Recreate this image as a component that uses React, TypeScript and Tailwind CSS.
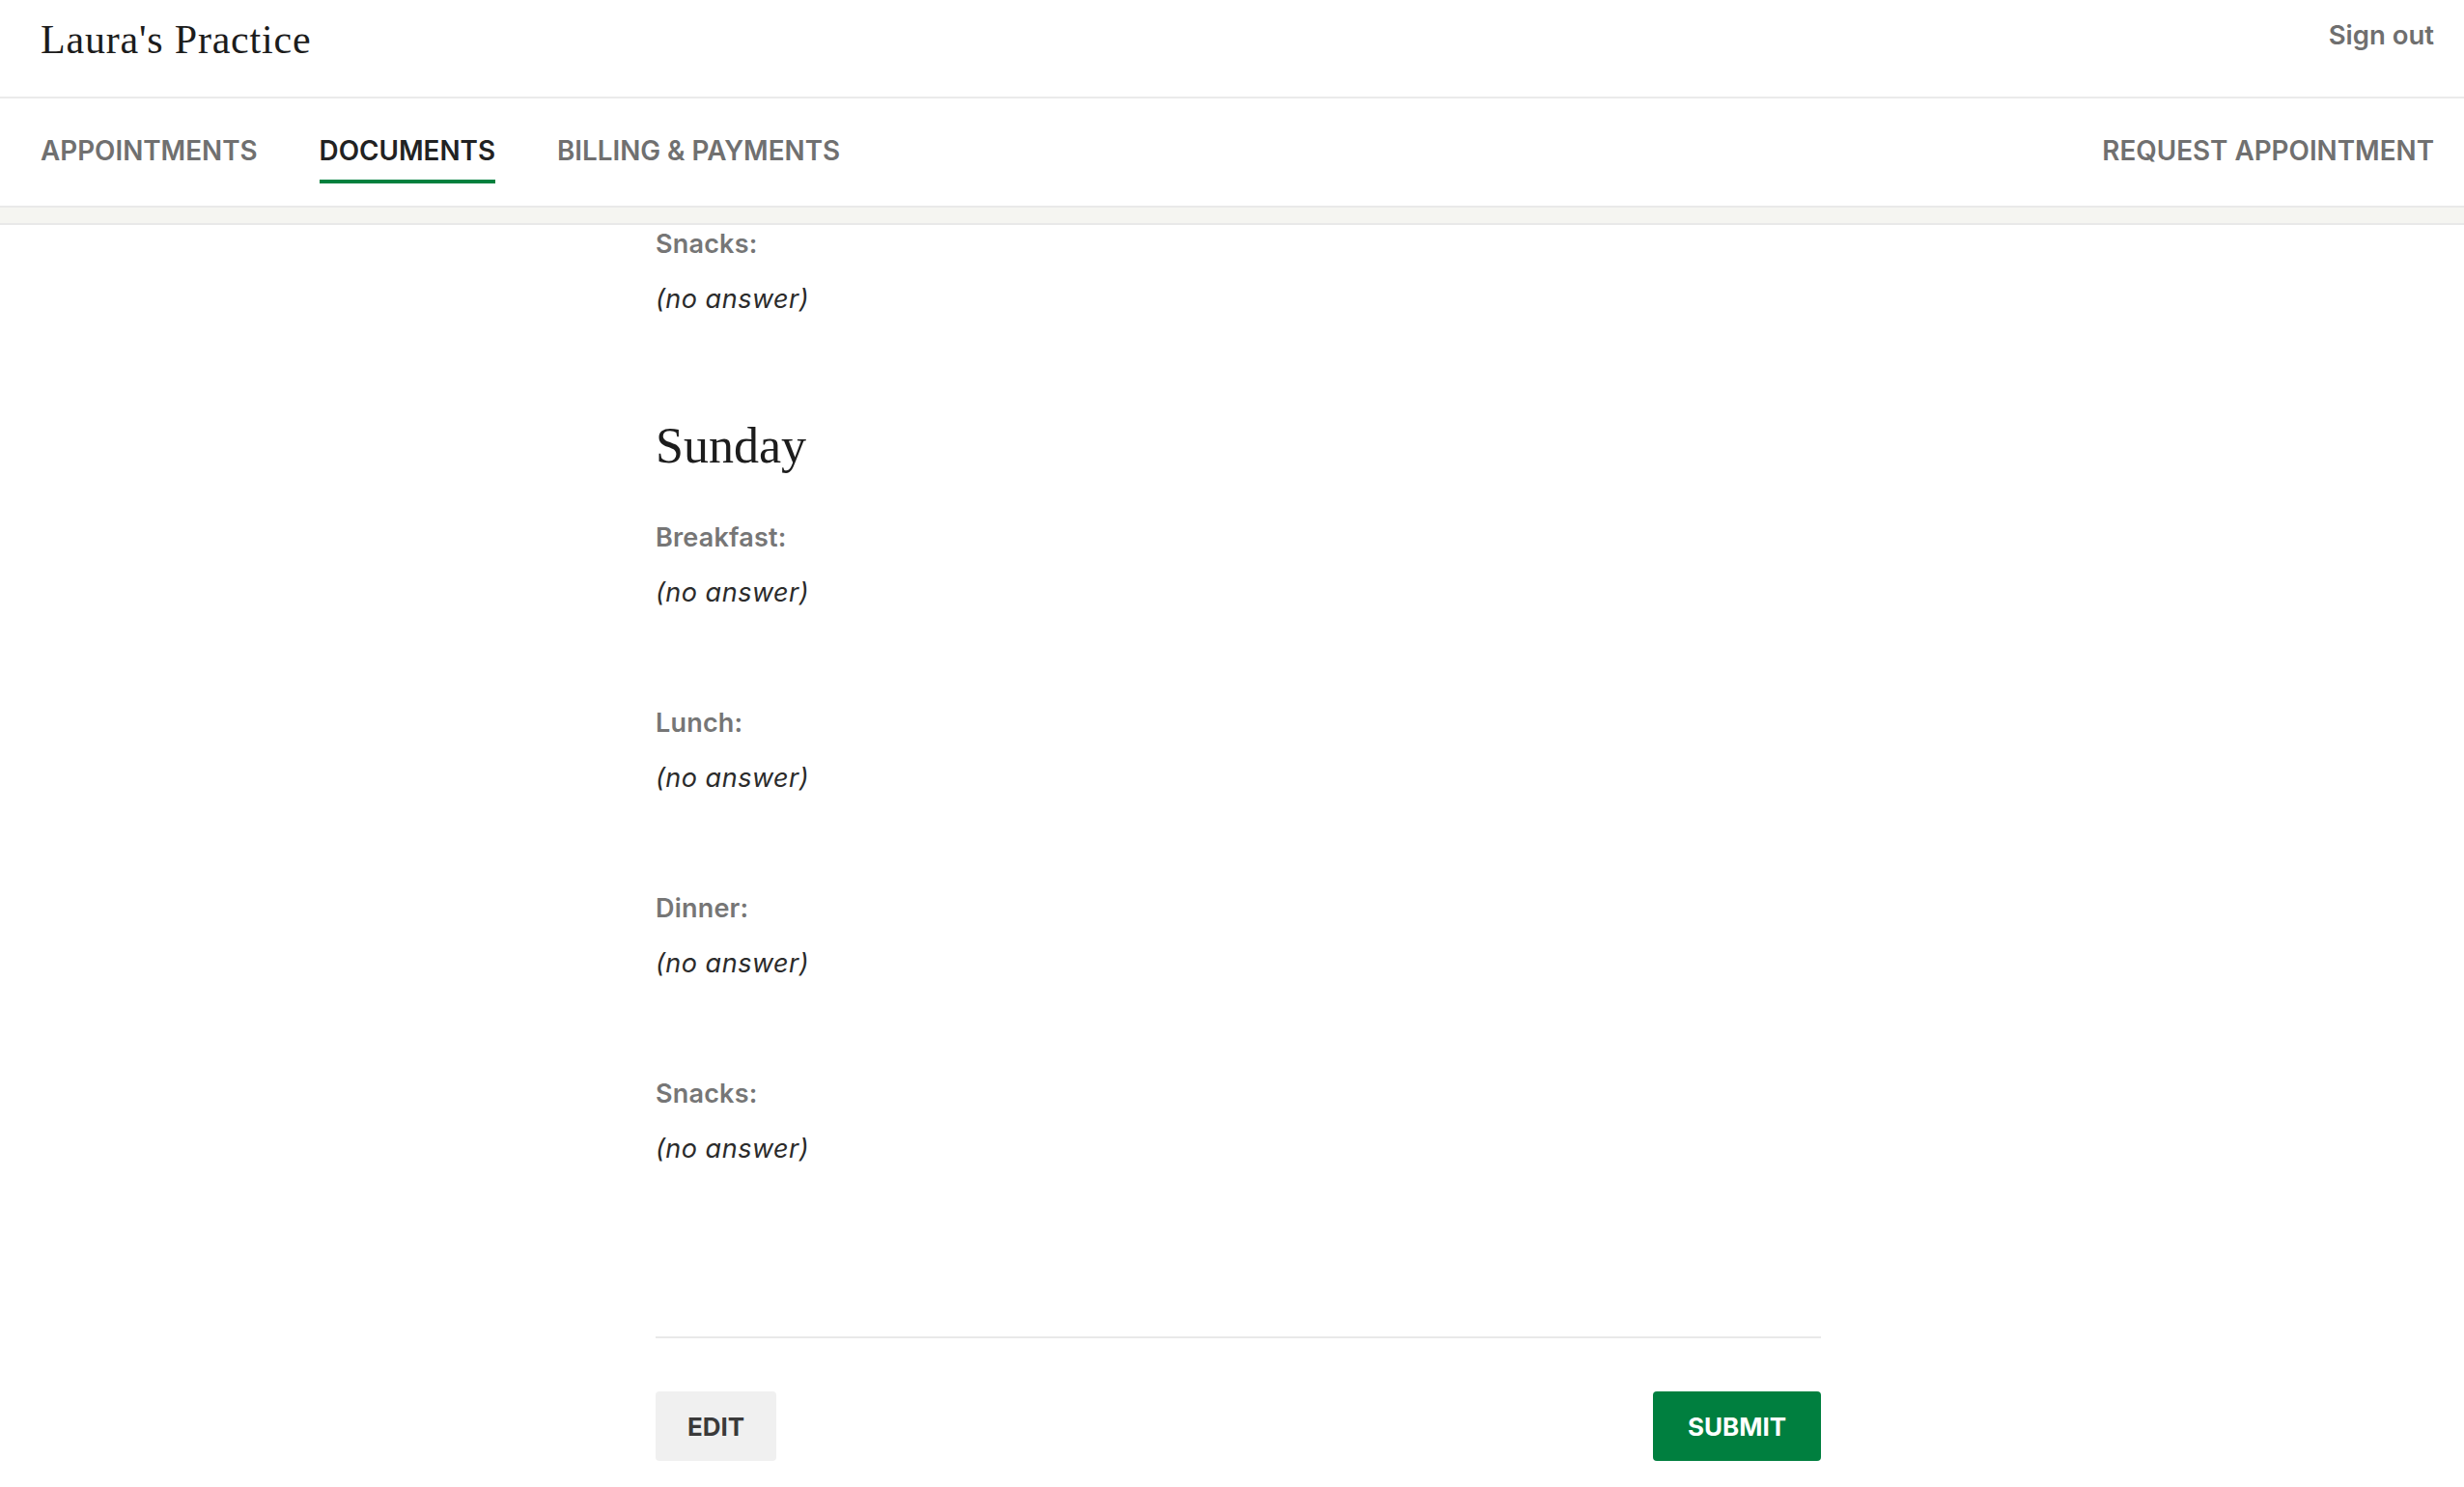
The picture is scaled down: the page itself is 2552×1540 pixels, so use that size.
import React from 'react';

const sans = "font-['Inter','Liberation_Sans',sans-serif]";
const serif = "font-['Liberation_Serif','Times_New_Roman',serif]";

const Field = ({ label, first }: { label: string; first?: boolean }) => (
  <div className={first ? '' : 'mt-[95px]'}>
    <div className={`${sans} text-[27px] leading-[40px] font-semibold tracking-[0.2px] text-[#767676]`}>{label}</div>
    <div className={`${sans} mt-[17px] text-[27px] leading-[40px] italic tracking-[0.5px] text-[#2b2b2b]`}>(no answer)</div>
  </div>
);

const navItems = [
  { label: 'APPOINTMENTS', active: false },
  { label: 'DOCUMENTS', active: true },
  { label: 'BILLING & PAYMENTS', active: false },
];

export default function App() {
  return (
    <div className="min-h-screen bg-white">
      {/* Top bar */}
      <header className="flex h-[102px] items-start justify-between border-b-2 border-[#ebebeb] pl-[42px] pr-[31px]">
        <div className={`${serif} pt-[16px] text-[42px] leading-[50px] tracking-[0.8px] text-[#1c1c1c]`}>
          Laura's Practice
        </div>
        <a className={`${sans} pt-[20px] text-[27.5px] leading-[32px] font-semibold text-[#6f6f6f]`}>Sign out</a>
      </header>

      {/* Tabs */}
      <nav className="flex h-[111px] items-start justify-between pl-[42px] pr-[31px] pt-[37px]">
        <div className="flex gap-[64px]">
          {navItems.map((item) => (
            <div key={item.label} className="flex flex-col">
              <span
                className={`${sans} text-[27.8px] leading-[34px] font-semibold ${
                  item.active ? 'text-[#222222]' : 'text-[#707070]'
                }`}
              >
                {item.label}
              </span>
              <div className={`mt-[13px] h-[4px] ${item.active ? 'bg-[#00803e]' : 'bg-transparent'}`}></div>
            </div>
          ))}
        </div>
        <span className={`${sans} text-[27.8px] leading-[34px] font-semibold text-[#707070]`}>REQUEST APPOINTMENT</span>
      </nav>
      <div className="h-[20px] border-y-2 border-[#e9e9e9] bg-[#f5f5f1]"></div>

      {/* Document body */}
      <main className="ml-[679px] w-[1207px]">
        <Field label="Snacks:" first />

        <h2 className={`${serif} mt-[102px] text-[52px] leading-[60px] text-[#1c1c1c]`}>Sunday</h2>

        <div className="mt-[45px]">
          <Field label="Breakfast:" first />
          <Field label="Lunch:" />
          <Field label="Dinner:" />
          <Field label="Snacks:" />
        </div>

        <div className="mt-[174px] h-[2px] bg-[#e9e9e9]"></div>

        <div className="mt-[55px] flex justify-between">
          <button className={`${sans} h-[72px] w-[125px] rounded-[4px] bg-[#f0f0f0] text-[26px] font-bold text-[#3a3a3a]`}>
            EDIT
          </button>
          <button className={`${sans} h-[72px] w-[174px] rounded-[4px] bg-[#007f3f] text-[26px] font-bold text-white`}>
            SUBMIT
          </button>
        </div>
      </main>
    </div>
  );
}
